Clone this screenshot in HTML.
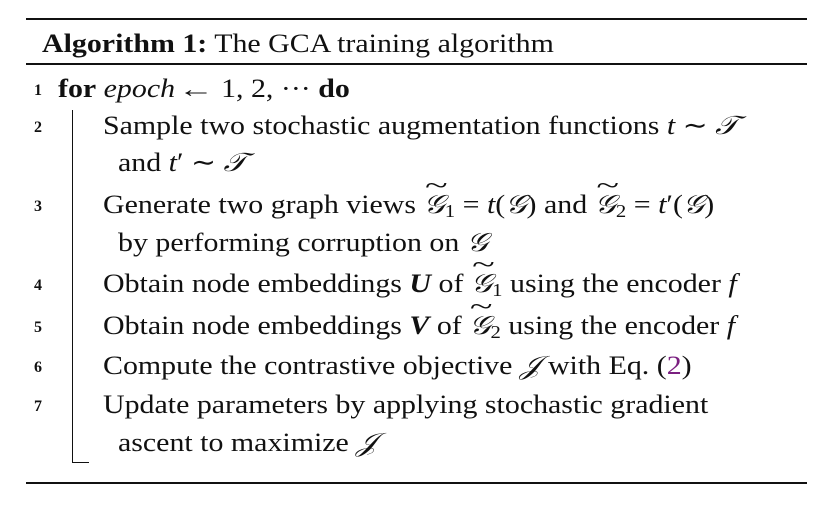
<!DOCTYPE html>
<html><head><meta charset="utf-8"><style>
body{margin:0;background:#fff;width:823px;height:531px;position:relative;overflow:hidden;font-family:"Liberation Serif",serif;color:#111;}
.r{position:absolute;left:26px;width:781px;background:#111;}
.t{position:absolute;font-size:26px;line-height:30px;white-space:nowrap;transform:scaleX(1.15);transform-origin:0 0;}
.n{position:absolute;left:34px;font-size:16px;font-weight:bold;line-height:20px;}
i{font-style:italic}
.til{position:relative;display:inline-block}
.til:before{content:"~";position:absolute;left:1px;top:-19px;font-size:26px;font-style:normal;transform:scaleX(1.4);transform-origin:0 50%}
sub{font-size:18px;vertical-align:-4px;line-height:0}
.purple{color:#7a1f80}
.ar{font-size:24px;display:inline-block;transform:scaleX(1.3);margin:0 3px 0 0}
</style></head><body>
<div class="r" style="top:18px;height:2px"></div>
<div class="t" style="left:42px;top:29px"><b>Algorithm 1:</b> The GCA training algorithm</div>
<div class="r" style="top:63px;height:1.5px"></div>
<div class="n" style="top:81px">1</div>
<div class="t" style="left:58px;top:74px"><b>for</b> <i>epoch</i> <span class="ar">←</span> 1, 2, ··· <b>do</b></div>
<div style="position:absolute;left:72px;top:110px;width:1.3px;height:353px;background:#111"></div>
<div style="position:absolute;left:72px;top:462px;width:17px;height:1.3px;background:#111"></div>
<div class="n" style="top:118px">2</div>
<div class="t" style="left:103px;top:111px">Sample two stochastic augmentation functions <i>t</i> ∼ <i>𝒯</i></div>
<div class="t" style="left:118px;top:148px">and <i>t</i>′ ∼ <i>𝒯</i></div>
<div class="n" style="top:197px">3</div>
<div class="t" style="left:103px;top:190px">Generate two graph views <span class="til"><i>𝒢</i></span><sub>1</sub> = <i>t</i>(<i>𝒢</i>) and <span class="til"><i>𝒢</i></span><sub>2</sub> = <i>t</i>′(<i>𝒢</i>)</div>
<div class="t" style="left:118px;top:228px">by performing corruption on <i>𝒢</i></div>
<div class="n" style="top:276px">4</div>
<div class="t" style="left:103px;top:269px">Obtain node embeddings <b><i>U</i></b> of <span class="til"><i>𝒢</i></span><sub>1</sub> using the encoder <i>f</i></div>
<div class="n" style="top:318px">5</div>
<div class="t" style="left:103px;top:311px">Obtain node embeddings <b><i>V</i></b> of <span class="til"><i>𝒢</i></span><sub>2</sub> using the encoder <i>f</i></div>
<div class="n" style="top:358px">6</div>
<div class="t" style="left:103px;top:351px">Compute the contrastive objective <i>𝒥</i> with Eq. (<span class="purple">2</span>)</div>
<div class="n" style="top:397px">7</div>
<div class="t" style="left:103px;top:390px">Update parameters by applying stochastic gradient</div>
<div class="t" style="left:118px;top:428px">ascent to maximize <i>𝒥</i></div>
<div class="r" style="top:482px;height:2px"></div>
</body></html>
